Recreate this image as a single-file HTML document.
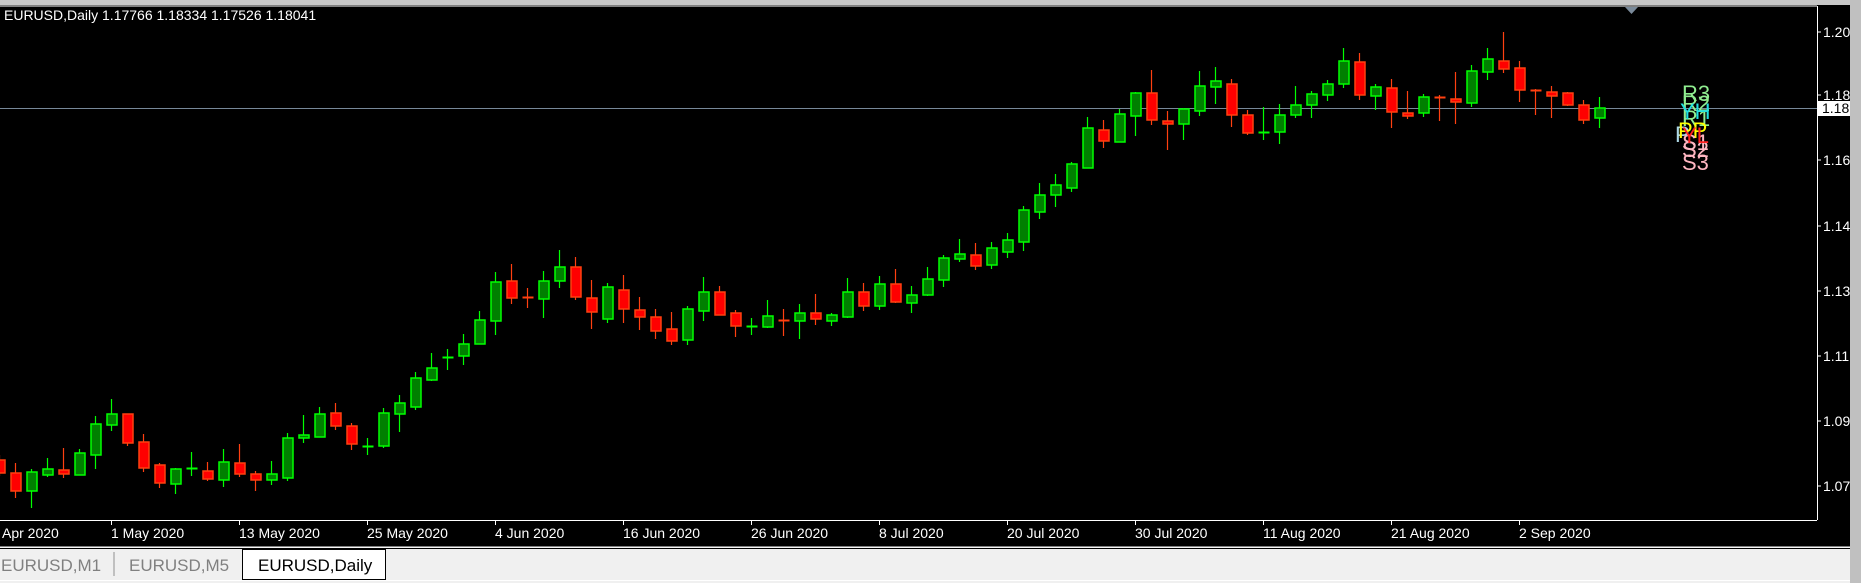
<!DOCTYPE html>
<html><head><meta charset="utf-8"><style>
html,body{margin:0;padding:0;width:1861px;height:583px;overflow:hidden;background:#f0f0f0;font-family:"Liberation Sans",sans-serif}
svg{position:absolute;left:0;top:0}
</style></head><body>
<svg id="s" width="1861" height="583" xmlns="http://www.w3.org/2000/svg" font-family="Liberation Sans, sans-serif">
<rect x="0" y="0" width="1861" height="583" fill="#f0f0f0"/>
<rect x="0" y="0" width="1850" height="5" fill="#c8c8c8"/>
<rect x="0" y="5" width="1850" height="542" fill="#000"/>
<line x1="0" y1="6" x2="1817" y2="6" stroke="#fff" stroke-width="1"/>
<line x1="1817.5" y1="6" x2="1817.5" y2="520" stroke="#fff" stroke-width="1"/>
<line x1="0" y1="520.5" x2="1817" y2="520.5" stroke="#fff" stroke-width="1"/>
<line x1="0" y1="547" x2="1850" y2="547" stroke="#fff" stroke-width="1"/>
<line x1="0" y1="548.5" x2="1850" y2="548.5" stroke="#000" stroke-width="1"/>
<line x1="0" y1="580.5" x2="1850" y2="580.5" stroke="#fff" stroke-width="1"/>
<rect x="1850" y="0" width="11" height="583" fill="#c0c0c0"/>
<polygon points="1625,7 1638,7 1631.5,14" fill="#7a8a9a"/>
<line x1="0" y1="108.5" x2="1817" y2="108.5" stroke="#778899" stroke-width="1"/>
<g id="c"></g>
<text x="4" y="20" fill="#fff" font-size="14">EURUSD,Daily  1.17766 1.18334 1.17526 1.18041</text>
<g fill="#fff" font-size="14" id="ax"></g>
<rect x="1817" y="101" width="33" height="15" fill="#fff"/>
<text x="1822" y="113" fill="#000" font-size="14">1.18</text>
<g font-size="22">
<text x="1682" y="111" fill="#90ee90">R2</text>
<text x="1682" y="101" fill="#90ee90">R3</text>
<text x="1682" y="126" fill="#90ee90">R1</text>
<text x="1680" y="119" fill="#20e0e0">YH</text>
<text x="1675" y="142" fill="#add8e6">P</text>
<text x="1678" y="138" fill="#ffff00">PP</text>
<text x="1682" y="150" fill="#ffb6c1">S1</text>
<text x="1682" y="157" fill="#ffb6c1">S2</text>
<text x="1682" y="170" fill="#ffb6c1">S3</text>
<text x="1682" y="143" fill="#ff2020">YL</text>
</g>
<text x="1" y="571" fill="#808080" font-size="17">EURUSD,M1</text>
<line x1="114" y1="552" x2="114" y2="576" stroke="#909090"/>
<text x="129" y="571" fill="#808080" font-size="17">EURUSD,M5</text>
<rect x="242.5" y="549.5" width="143" height="30" fill="#fff" stroke="#000"/>
<text x="258" y="571" fill="#000" font-size="17">EURUSD,Daily</text>
</svg>
<script>
var d=[[-1,'r',460,473,455,476],[0,'r',473,491,463,498],[1,'g',472,491,469,508],[2,'g',469,475,458,477],[3,'r',470,474,448,478],[4,'g',453,475,449,475],[5,'g',424,455,416,469],[6,'g',414,425,399,431],[7,'r',414,443,414,446],[8,'r',442,468,434,472],[9,'r',465,483,463,488],[10,'g',469,484,468,494],[11,'g',468,469,452,476],[12,'r',471,479,462,481],[13,'g',462,480,449,487],[14,'r',463,474,444,477],[15,'r',474,480,471,491],[16,'g',474,480,461,485],[17,'g',438,478,433,481],[18,'g',435,438,415,443],[19,'g',414,437,407,437],[20,'r',413,426,403,430],[21,'r',426,444,423,450],[22,'g',446,447,438,455],[23,'g',413,446,408,448],[24,'g',403,414,395,432],[25,'g',378,407,372,410],[26,'g',368,380,353,381],[27,'g',357,359,349,370],[28,'g',344,356,334,365],[29,'g',320,344,311,344],[30,'g',282,321,272,335],[31,'r',281,298,264,304],[32,'r',297,298,288,308],[33,'g',281,299,271,318],[34,'g',267,281,250,288],[35,'r',267,297,257,300],[36,'r',298,312,280,329],[37,'g',287,319,283,323],[38,'r',290,309,275,323],[39,'r',310,317,297,330],[40,'r',317,331,309,339],[41,'r',329,341,312,345],[42,'g',309,340,306,345],[43,'g',292,311,277,321],[44,'r',292,315,286,315],[45,'r',313,326,310,337],[46,'g',326,328,318,335],[47,'g',316,327,300,328],[48,'r',320,321,309,336],[49,'g',313,321,304,339],[50,'r',313,319,294,325],[51,'g',315,321,313,326],[52,'g',292,317,278,318],[53,'r',292,306,283,311],[54,'g',284,306,276,310],[55,'r',284,302,269,303],[56,'g',295,303,286,313],[57,'g',279,295,267,296],[58,'g',258,280,255,287],[59,'g',254,259,239,262],[60,'r',255,266,243,270],[61,'g',248,265,242,269],[62,'g',240,252,233,258],[63,'g',210,242,206,251],[64,'g',195,212,183,219],[65,'g',185,195,174,207],[66,'g',164,188,162,192],[67,'g',128,168,117,168],[68,'r',130,141,120,148],[69,'g',114,142,109,142],[70,'g',93,116,92,136],[71,'r',93,120,70,125],[72,'r',121,124,111,150],[73,'g',109,124,108,140],[74,'g',86,111,71,116],[75,'g',81,87,67,104],[76,'r',84,115,79,127],[77,'r',115,133,110,135],[78,'g',132,133,107,140],[79,'g',115,132,104,144],[80,'g',105,115,86,118],[81,'g',94,105,91,118],[82,'g',84,95,80,101],[83,'g',61,84,48,88],[84,'r',62,95,53,100],[85,'g',87,96,84,110],[86,'r',88,112,79,128],[87,'r',113,116,91,119],[88,'g',97,113,94,117],[89,'r',97,99,95,121],[90,'r',99,102,72,124],[91,'g',71,103,65,107],[92,'g',59,72,48,80],[93,'r',61,69,32,73],[94,'r',68,90,61,102],[95,'r',90,91,89,115],[96,'r',92,96,86,118],[97,'r',93,105,92,106],[98,'r',105,120,100,124],[99,'g',108,118,97,128]];
var h='';
d.forEach(function(a){var c=15.5+16*a[0];var g=a[1]=='g';var wc=g?'#00ff00':'#ff4010';var fc=g?'#008000':'#ff0000';
h+='<line x1="'+c+'" y1="'+a[4]+'" x2="'+c+'" y2="'+a[5]+'" stroke="'+wc+'" stroke-width="1.2"/>';
if(a[3]-a[2]<=2){h+='<rect x="'+(c-5)+'" y="'+(a[2]-0.5)+'" width="11" height="2" fill="'+wc+'"/>';}
else h+='<rect x="'+(c-4.5)+'" y="'+a[2]+'" width="10" height="'+(a[3]-a[2])+'" fill="'+fc+'" stroke="'+wc+'" stroke-width="1.5"/>';});
document.getElementById('c').innerHTML=h;
var ax='';
[['1.20',32],['1.18',95],['1.16',160],['1.14',226],['1.13',291],['1.11',356],['1.09',421],['1.07',486]].forEach(function(p){ax+='<line x1="1817" y1="'+p[1]+'" x2="1821" y2="'+p[1]+'" stroke="#fff"/><text x="1823" y="'+(p[1]+5)+'">'+p[0]+'</text>';});
var dl=[['Apr 2020',-17],['1 May 2020',111],['13 May 2020',239],['25 May 2020',367],['4 Jun 2020',495],['16 Jun 2020',623],['26 Jun 2020',751],['8 Jul 2020',879],['20 Jul 2020',1007],['30 Jul 2020',1135],['11 Aug 2020',1263],['21 Aug 2020',1391],['2 Sep 2020',1519]];
dl.forEach(function(p){var tx=p[0]=='Apr 2020'?2:p[1];if(p[1]>0)ax+='<line x1="'+(p[1]+0.5)+'" y1="520" x2="'+(p[1]+0.5)+'" y2="525" stroke="#fff"/>';ax+='<text x="'+tx+'" y="538">'+p[0]+'</text>';});
document.getElementById('ax').innerHTML=ax;
</script>
</body></html>
